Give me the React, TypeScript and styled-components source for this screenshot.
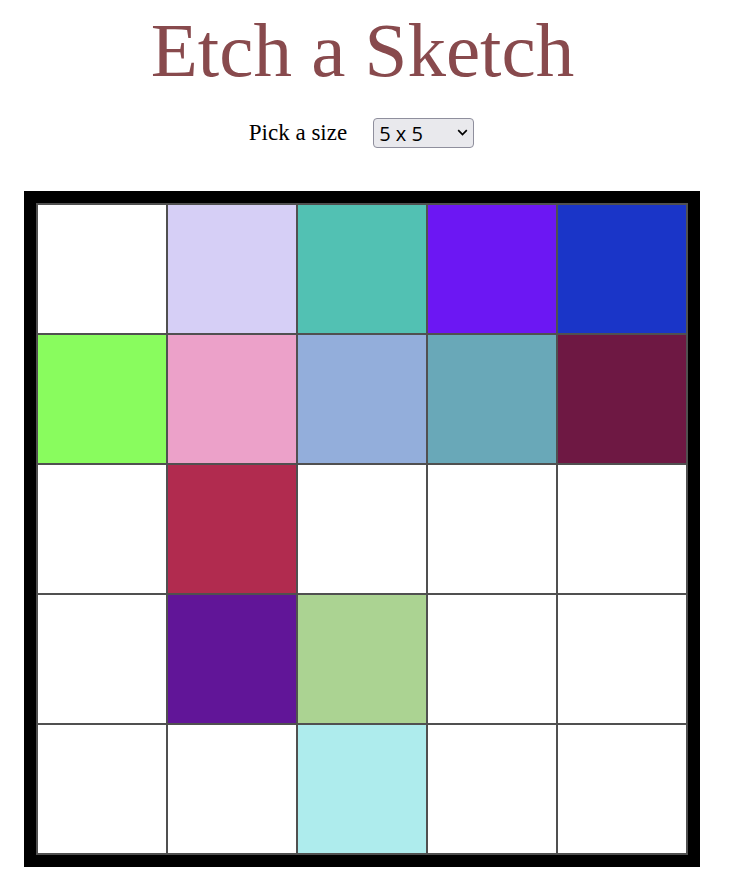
import React, { useState } from "react";
import styled, { createGlobalStyle } from "styled-components";

const GlobalStyle = createGlobalStyle`
  html, body { margin: 0; padding: 0; background: #ffffff; }
  body { margin: 8px; font-family: "Liberation Serif", "Times New Roman", serif; }
`;

const Page = styled.main`
  display: flex;
  flex-direction: column;
  align-items: center;
`;

const Title = styled.h1`
  margin: -2px 7px 0 0;
  font-family: "Liberation Serif", "Times New Roman", serif;
  font-weight: normal;
  font-size: 77px;
  line-height: normal;
  color: #884a4d;
`;

const Controls = styled.div`
  display: flex;
  align-items: center;
  gap: 26px;
  margin-top: 23px;
  margin-right: 9px;
  height: 30px;
`;

const Label = styled.label`
  font-family: "Liberation Serif", "Times New Roman", serif;
  font-size: 23px;
  color: #000;
`;

const SelectWrap = styled.div`
  position: relative;
  display: flex;
`;

const Select = styled.select`
  appearance: none;
  -webkit-appearance: none;
  width: 101px;
  height: 30px;
  padding: 0 0 0 5px;
  border: 1px solid #8f8f9d;
  border-radius: 4px;
  background: #e9e9ed;
  font-family: "Open Sans", "Liberation Sans", Arial, sans-serif;
  font-size: 20px;
  color: #000;
  outline: none;
`;

const Chevron = styled.svg`
  position: absolute;
  right: 6px;
  top: 11px;
  width: 11px;
  height: 7px;
  pointer-events: none;
`;

const Board = styled.div`
  align-self: flex-start;
  margin: 43px 0 0 16px;
  border: 12px solid #000;
  background: #505050;
  padding: 1px;
  display: grid;
  grid-template-columns: repeat(5, 130px);
  grid-auto-rows: 130px;
`;

const Cell = styled.div<{ $color: string }>`
  box-sizing: border-box;
  border: 1px solid #505050;
  background: ${(p) => p.$color};
`;

const W = "#ffffff";
const colors = [
  W, "#d6cff6", "#52c1b3", "#6c17f3", "#1a35c8",
  "#89fc5e", "#eca1c9", "#93aedb", "#69a8b8", "#6e1843",
  W, "#b12b4f", W, W, W,
  W, "#611598", "#abd392", W, W,
  W, W, "#aeeced", W, W,
];

export default function App() {
  const [size, setSize] = useState("5");
  return (
    <>
      <GlobalStyle />
      <Page>
        <Title>Etch a Sketch</Title>
        <Controls>
          <Label htmlFor="size">Pick a size</Label>
          <SelectWrap>
            <Select id="size" value={size} onChange={(e) => setSize(e.target.value)}>
              <option value="5">5 x 5</option>
              <option value="10">10 x 10</option>
              <option value="16">16 x 16</option>
              <option value="32">32 x 32</option>
            </Select>
            <Chevron viewBox="0 0 11 7">
              <path d="M1.2 1.2 L5.5 5.5 L9.8 1.2" fill="none" stroke="#000" strokeWidth="1.7" />
            </Chevron>
          </SelectWrap>
        </Controls>
        <Board>
          {colors.map((c, i) => (
            <Cell key={i} $color={c} />
          ))}
        </Board>
      </Page>
    </>
  );
}
